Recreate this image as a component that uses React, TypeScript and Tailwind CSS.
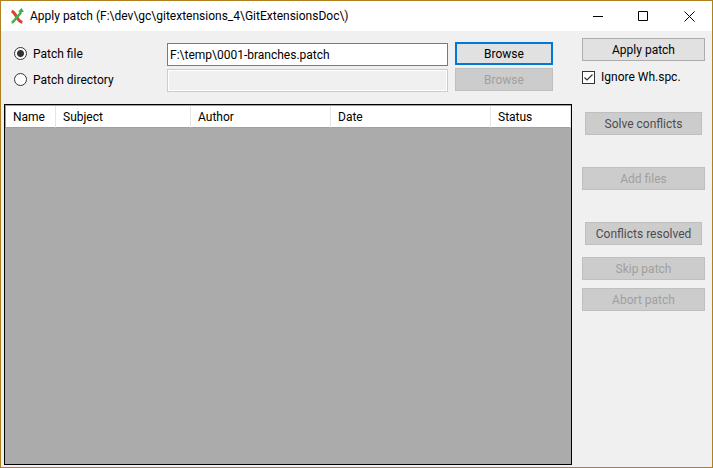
import { useState } from "react";
import type { ButtonHTMLAttributes } from "react";
import { clsx } from "clsx";

type PushButtonProps = ButtonHTMLAttributes<HTMLButtonElement> & { tone?: "normal" | "focused" | "muted" };

function PushButton({ tone = "normal", className, children, ...rest }: PushButtonProps) {
  return (
    <button
      type="button"
      className={clsx(
        "flex h-[23px] shrink-0 items-center justify-center whitespace-nowrap leading-4",
        tone === "normal" && "border border-[#adadad] bg-[#e1e1e1] disabled:border-[#bfbfbf] disabled:bg-[#cccccc] disabled:text-[#a0a0a0]",
        tone === "focused" && "border-2 border-[#0078d7] bg-[#e1e1e1]",
        tone === "muted" && "border border-[#bfbfbf] bg-[#cccccc] text-[#4c4c4c]",
        className,
      )}
      {...rest}
    >
      {children}
    </button>
  );
}

function AppIcon() {
  return (
    <svg width="14" height="16" viewBox="0 0 14 16" fill="none" aria-hidden="true">
      <path d="M1.6 3.2C3.4 3.6 4.4 5 5.8 7.4L8 11C9.2 13 10.3 14 12.4 14.2" stroke="#dd4132" strokeWidth="3" />
      <path d="M1.6 14.4C3.8 14.2 4.4 12.4 5.8 10.4C7.4 8 10.6 7.4 11 3" stroke="#42b04a" strokeWidth="2.6" />
      <path d="M8 3.4L11.6 0L14 4Z" fill="#42b04a" />
    </svg>
  );
}

function TitleBar() {
  return (
    <header className="flex h-[30px] shrink-0 items-center bg-white pl-[9px]">
      <AppIcon />
      <h1 className="ml-1.5 flex-1 truncate leading-4">Apply patch (F:\dev\gc\gitextensions_4\GitExtensionsDoc\)</h1>
      <button type="button" aria-label="Minimize" className="flex h-full w-[46px] items-center justify-center">
        <svg width="11" height="11" viewBox="0 0 11 11" stroke="#000"><path d="M0 5.5H10" /></svg>
      </button>
      <button type="button" aria-label="Maximize" className="flex h-full w-[45px] items-center justify-center">
        <svg width="11" height="11" viewBox="0 0 11 11" fill="none" stroke="#000"><path d="M.5 .5H9.5V9.5H.5Z" /></svg>
      </button>
      <button type="button" aria-label="Close" className="flex h-full w-[46px] items-center justify-center">
        <svg width="11" height="11" viewBox="0 0 11 11" stroke="#000"><path d="M.5 .5L10.5 10.5M10.5 .5L.5 10.5" /></svg>
      </button>
    </header>
  );
}

const radioClass =
  "size-[13px] appearance-none rounded-full border border-[#333333] bg-white checked:bg-[radial-gradient(circle,#333333_3px,#ffffff_4px)]";

const columns = [
  { name: "Name", width: "w-[50px]" },
  { name: "Subject", width: "w-[135px]" },
  { name: "Author", width: "w-[140px]" },
  { name: "Date", width: "w-[160px]" },
  { name: "Status", width: "" },
];

export default function App() {
  const [source, setSource] = useState("file");
  const [file, setFile] = useState("F:\\temp\\0001-branches.patch");
  const [ignoreSpace, setIgnoreSpace] = useState(true);
  const fromFile = source === "file";

  return (
    <div className="flex min-h-screen flex-col border border-[#b08020] bg-[#f0f0f0] font-['Roboto','Open_Sans',sans-serif] text-[12px] text-black">
      <TitleBar />
      <div className="flex flex-1">
        <main className="flex min-w-0 flex-1 flex-col pb-0.5 pl-[3px]">
          <form className="mb-3 flex flex-col gap-0.5 pl-2.5 pr-[19px] pt-[11px]">
            <div className="flex h-6">
              <label className="flex h-[23px] w-[153px] items-center gap-1.5 leading-4">
                <input type="radio" name="source" className={radioClass} checked={fromFile} onChange={() => setSource("file")} />
                Patch file
              </label>
              <input
                aria-label="Patch file path"
                className="h-[23px] min-w-0 flex-1 self-end border border-[#7a7a7a] bg-white px-0.5 leading-4 outline-none disabled:border-[#cccccc] disabled:bg-[#f0f0f0]"
                value={file}
                disabled={!fromFile}
                onChange={(e) => setFile(e.target.value)}
              />
              <PushButton tone={fromFile ? "focused" : "normal"} disabled={!fromFile} className="ml-[7px] w-[98px]">Browse</PushButton>
            </div>
            <div className="flex h-6">
              <label className="flex h-[23px] w-[153px] items-center gap-1.5 leading-4">
                <input type="radio" name="source" className={radioClass} checked={!fromFile} onChange={() => setSource("directory")} />
                Patch directory
              </label>
              <input
                aria-label="Patch directory path"
                className="h-[23px] min-w-0 flex-1 self-end border border-[#7a7a7a] bg-white px-0.5 leading-4 outline-none disabled:border-[#cccccc] disabled:bg-[#f0f0f0] disabled:inset-ring disabled:inset-ring-white"
                disabled={fromFile}
              />
              <PushButton disabled={fromFile} className="ml-[7px] w-[98px]">Browse</PushButton>
            </div>
          </form>
          <div className="flex-1 border border-black bg-[#ababab]">
            <table className="w-full table-fixed border-separate border-spacing-0 border-l border-t border-[#a0a0a0] bg-white">
              <thead>
                <tr>
                  {columns.map(({ name, width }) => (
                    <th
                      key={name}
                      scope="col"
                      className={clsx("h-[22px] border-b border-r border-b-[#a0a0a0] border-r-[#e5e5e5] py-0 pl-[7px] text-left font-normal leading-4", width)}
                    >
                      {name}
                    </th>
                  ))}
                </tr>
              </thead>
            </table>
          </div>
        </main>
        <aside className="flex w-[140px] shrink-0 flex-col pb-2 pl-2.5 pr-[7px] pt-[7px]">
          <PushButton>Apply patch</PushButton>
          <label className="mt-2 flex h-4 items-center gap-1.5 whitespace-nowrap leading-4">
            <span className="relative size-[13px]">
              <input
                type="checkbox"
                className="block size-[13px] appearance-none border border-[#333333] bg-white"
                checked={ignoreSpace}
                onChange={(e) => setIgnoreSpace(e.target.checked)}
              />
              {ignoreSpace && (
                <svg className="pointer-events-none absolute inset-0" width="13" height="13" viewBox="0 0 13 13" fill="none" stroke="#333333" strokeWidth="1.2">
                  <path d="M2.5 6.5L5 9L10.5 3.5" />
                </svg>
              )}
            </span>
            Ignore Wh.spc.
          </label>
          <PushButton tone="muted" className="mx-[3px] mt-[27px]">Solve conflicts</PushButton>
          <PushButton disabled className="mt-8">Add files</PushButton>
          <PushButton tone="muted" className="mx-[3px] mt-8">Conflicts resolved</PushButton>
          <PushButton disabled className="mt-3">Skip patch</PushButton>
          <PushButton disabled className="mt-2">Abort patch</PushButton>
        </aside>
      </div>
    </div>
  );
}
